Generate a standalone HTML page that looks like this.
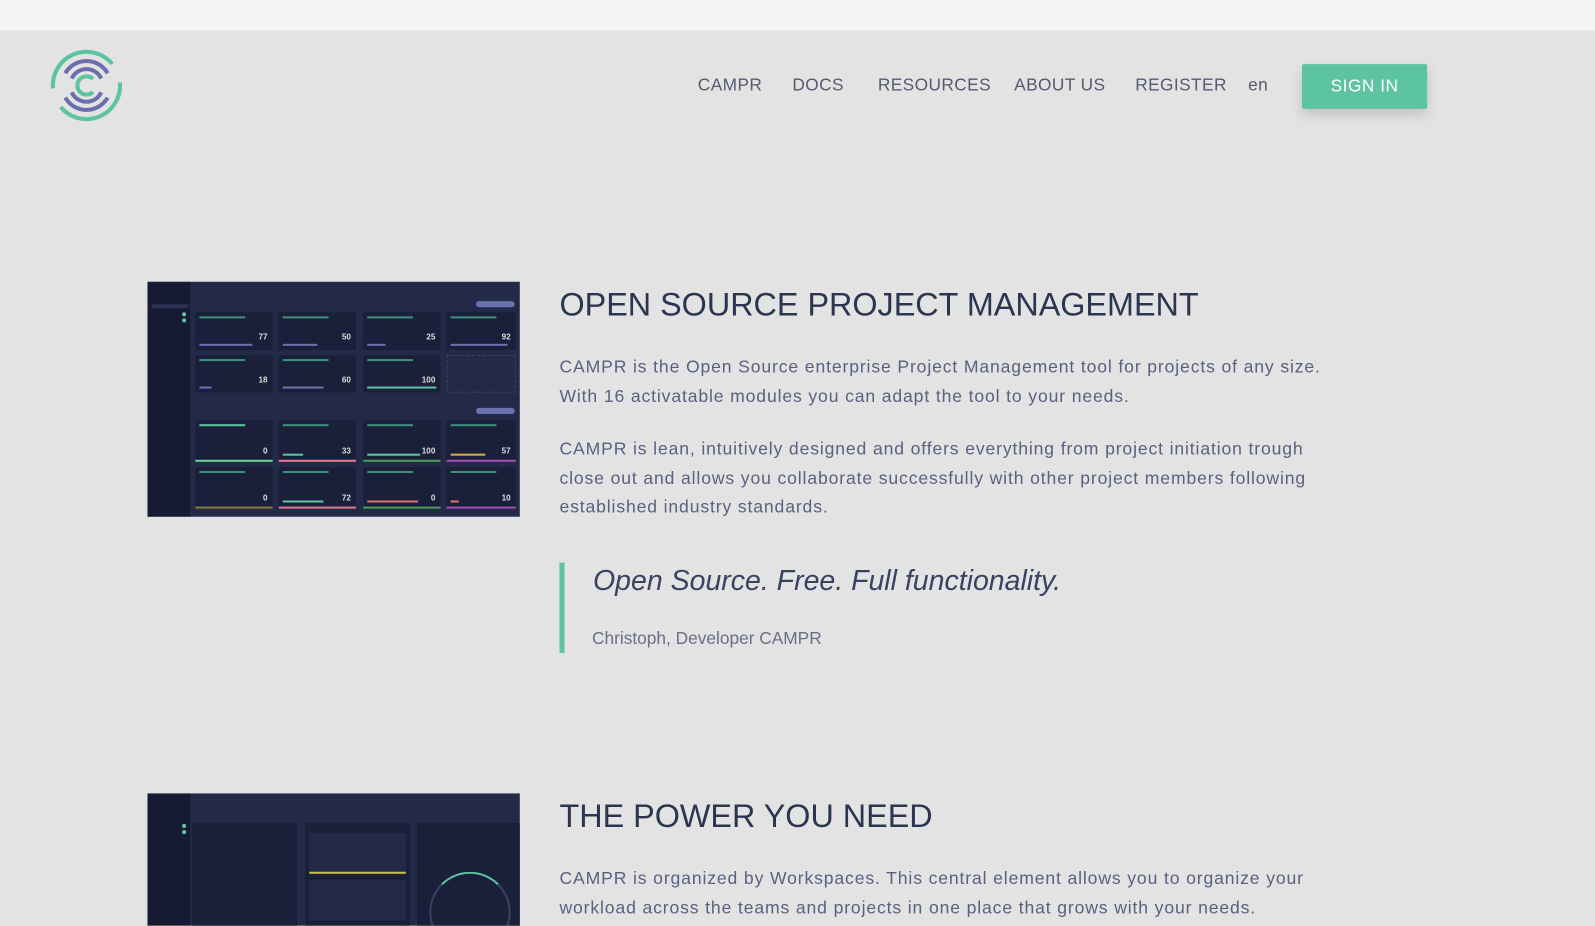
<!DOCTYPE html>
<html><head><meta charset="utf-8"><style>
*{margin:0;padding:0;box-sizing:border-box}
body{width:1595px;height:901px;overflow:hidden;background:#e3e3e3;font-family:"Liberation Sans",sans-serif;position:relative}
#w{position:absolute;left:0;top:0;width:1568px;height:886px;transform:scale(1.0172);transform-origin:0 0}
.top{position:absolute;left:0;top:0;width:1568px;height:30px;background:#f5f5f3}
.nav{position:absolute;top:74px;font-size:17px;color:#555a6e;letter-spacing:.4px}
.btn{position:absolute;left:1280px;top:63px;width:123px;height:44px;background:#5cc49f;color:#fff;font-size:17px;letter-spacing:.5px;text-align:center;line-height:44px;border-radius:2px;box-shadow:0 6px 12px rgba(0,0,0,.15)}
h2{position:absolute;left:550px;font-weight:300;font-size:31.8px;color:#2c3550;white-space:nowrap}
p{position:absolute;left:550px;font-size:17.3px;line-height:28.5px;color:#5a6080;width:780px;letter-spacing:.85px}
.dash{position:absolute;left:145px;width:366px;background:#232a48;overflow:hidden}
.sb{position:absolute;left:0;top:0;width:42px;height:100%;background:#161b33}
.c{position:absolute;background:#1a203a}
.bar{position:absolute;height:2px;left:4px;background:#6c72b0}
.n{position:absolute;right:5px;color:#ddd;font-size:8px;font-weight:bold}
.t{position:absolute;left:4px;top:4px;height:2px;width:45px;background:#3f8f7d}
</style></head><body><div id="w">
<div class="top"></div>
<svg style="position:absolute;left:46px;top:45px" width="78" height="78" viewBox="0 0 78 78" fill="none">
<path d="M6.1 41.9 A33 33 0 0 1 64.3 17.8" stroke="#5cc49f" stroke-width="4"/>
<path d="M71.9 36.1 A33 33 0 0 1 13.7 60.2" stroke="#5cc49f" stroke-width="4"/>
<path d="M18.2 27 A24 24 0 0 1 59.8 27" stroke="#6a6eaa" stroke-width="4"/>
<path d="M24.5 32.2 A16 16 0 0 1 53.5 32.2" stroke="#6a6eaa" stroke-width="4"/>
<path d="M59.8 51 A24 24 0 0 1 18.2 51" stroke="#6a6eaa" stroke-width="4"/>
<path d="M53.5 45.8 A16 16 0 0 1 24.5 45.8" stroke="#6a6eaa" stroke-width="4"/>
<path d="M45.4 32.6 A9 9 0 1 0 45.4 45.4" stroke="#5cc49f" stroke-width="4"/>
</svg>
<div class="nav" style="left:686px">CAMPR</div>
<div class="nav" style="left:779px">DOCS</div>
<div class="nav" style="left:863px">RESOURCES</div>
<div class="nav" style="left:997px">ABOUT US</div>
<div class="nav" style="left:1116px">REGISTER</div>
<div class="nav" style="left:1227px">en</div>
<div class="btn">SIGN IN</div>

<div class="dash" style="top:277px;height:231px">
<div class="sb"></div>
<div style="position:absolute;left:4px;top:22px;width:36px;height:4px;background:#2a3150"></div>
<div style="position:absolute;left:34px;top:30px;width:4px;height:4px;border-radius:50%;background:#5cc49f"></div>
<div style="position:absolute;left:34px;top:36px;width:4px;height:4px;border-radius:50%;background:#5cc49f"></div>
<div style="position:absolute;left:323px;top:19px;width:38px;height:6px;border-radius:3px;background:#6c72b0"></div>
<div style="position:absolute;left:323px;top:124px;width:38px;height:6px;border-radius:3px;background:#6c72b0"></div>
<div class="c" style="left:47px;top:30px;width:76px;height:37px"><div class="t"></div><div class="bar" style="top:31px;width:52px"></div><div class="n" style="top:20px">77</div></div>
<div class="c" style="left:129px;top:30px;width:76px;height:37px"><div class="t"></div><div class="bar" style="top:31px;width:34px"></div><div class="n" style="top:20px">50</div></div>
<div class="c" style="left:212px;top:30px;width:76px;height:37px"><div class="t"></div><div class="bar" style="top:31px;width:18px"></div><div class="n" style="top:20px">25</div></div>
<div class="c" style="left:294px;top:30px;width:68px;height:37px"><div class="t"></div><div class="bar" style="top:31px;width:56px"></div><div class="n" style="top:20px">92</div></div>
<div class="c" style="left:47px;top:72px;width:76px;height:37px"><div class="t"></div><div class="bar" style="top:31px;width:12px"></div><div class="n" style="top:20px">18</div></div>
<div class="c" style="left:129px;top:72px;width:76px;height:37px"><div class="t"></div><div class="bar" style="top:31px;width:40px"></div><div class="n" style="top:20px">60</div></div>
<div class="c" style="left:212px;top:72px;width:76px;height:37px"><div class="t"></div><div class="bar" style="top:31px;width:68px;background:#5cc49f"></div><div class="n" style="top:20px">100</div></div>
<div style="position:absolute;left:294px;top:72px;width:68px;height:37px;border:1px dashed #3a4262"></div>
<div class="c" style="left:47px;top:136px;width:76px;height:41px;border-bottom:2px solid #6fcf9a"><div class="t" style="background:#5cc49f"></div><div class="n" style="top:26px">0</div></div>
<div class="c" style="left:129px;top:136px;width:76px;height:41px;border-bottom:2px solid #e07890"><div class="t"></div><div class="bar" style="top:33px;width:20px;background:#5cc49f"></div><div class="n" style="top:26px">33</div></div>
<div class="c" style="left:212px;top:136px;width:76px;height:41px;border-bottom:2px solid #4a9e5a"><div class="t"></div><div class="bar" style="top:33px;width:52px;background:#5cc49f"></div><div class="n" style="top:26px">100</div></div>
<div class="c" style="left:294px;top:136px;width:68px;height:41px;border-bottom:2px solid #a050b0"><div class="t"></div><div class="bar" style="top:33px;width:34px;background:#d0b040"></div><div class="n" style="top:26px">57</div></div>
<div class="c" style="left:47px;top:182px;width:76px;height:41px;border-bottom:2px solid #8a7a40"><div class="t"></div><div class="n" style="top:26px">0</div></div>
<div class="c" style="left:129px;top:182px;width:76px;height:41px;border-bottom:2px solid #e07890"><div class="t"></div><div class="bar" style="top:33px;width:40px;background:#5cc49f"></div><div class="n" style="top:26px">72</div></div>
<div class="c" style="left:212px;top:182px;width:76px;height:41px;border-bottom:2px solid #4a9e5a"><div class="t"></div><div class="bar" style="top:33px;width:50px;background:#e07070"></div><div class="n" style="top:26px">0</div></div>
<div class="c" style="left:294px;top:182px;width:68px;height:41px;border-bottom:2px solid #a050b0"><div class="t"></div><div class="bar" style="top:33px;width:8px;background:#e07070"></div><div class="n" style="top:26px">10</div></div>
</div>

<h2 style="top:281px">OPEN SOURCE PROJECT MANAGEMENT</h2>
<p style="top:346px">CAMPR is the Open Source enterprise Project Management tool for projects of any size. With 16 activatable modules you can adapt the tool to your needs.</p>
<p style="top:427px">CAMPR is lean, intuitively designed and offers everything from project initiation trough close out and allows you collaborate successfully with other project members following established industry standards.</p>
<div style="position:absolute;left:550px;top:553px;width:5px;height:89px;background:#5cc49f"></div>
<div style="position:absolute;left:583px;top:555px;font-size:28px;font-style:italic;color:#3a4262">Open Source. Free. Full functionality.</div>
<div style="position:absolute;left:582px;top:618px;font-size:17px;color:#6a6f88">Christoph, Developer CAMPR</div>

<div class="dash" style="top:780px;height:130px">
<div class="sb"></div>
<div style="position:absolute;left:34px;top:30px;width:4px;height:4px;border-radius:50%;background:#5cc49f"></div>
<div style="position:absolute;left:34px;top:36px;width:4px;height:4px;border-radius:50%;background:#5cc49f"></div>
<div class="c" style="left:44px;top:29px;width:103px;height:110px"></div>
<div class="c" style="left:155px;top:29px;width:103px;height:110px"><div style="position:absolute;left:4px;top:10px;width:95px;height:40px;background:#232a48;border-bottom:2px solid #c8c050"></div><div style="position:absolute;left:4px;top:56px;width:95px;height:40px;background:#232a48"></div></div>
<div class="c" style="left:265px;top:29px;width:103px;height:110px"><div style="position:absolute;left:12px;top:48px;width:80px;height:80px;border-radius:50%;border:2px solid #3a4262;border-top-color:#5cc49f"></div></div>
</div>
<h2 style="top:784px">THE POWER YOU NEED</h2>
<p style="top:849px">CAMPR is organized by Workspaces. This central element allows you to organize your workload across the teams and projects in one place that grows with your needs.</p>
</div></body></html>
